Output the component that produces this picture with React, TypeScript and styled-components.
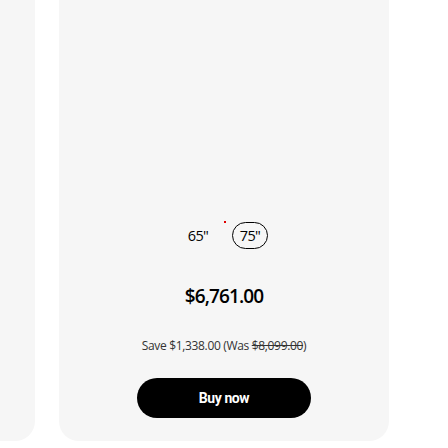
import React from "react";
import styled, { createGlobalStyle } from "styled-components";

const Global = createGlobalStyle`
  html, body { margin: 0; padding: 0; background: #ffffff; }
  body { width: 448px; height: 448px; overflow: hidden; font-family: "Open Sans", "Liberation Sans", sans-serif; }
`;

const Viewport = styled.div`
  width: 448px;
  height: 448px;
  overflow: hidden;
`;

const Track = styled.div`
  display: flex;
  gap: 24px;
  margin-top: -40px;
  margin-left: -295px;
`;

const Card = styled.div`
  flex: 0 0 330px;
  height: 481px;
  background: #f6f6f6;
  border-radius: 20px;
  box-sizing: border-box;
  display: flex;
  flex-direction: column;
  align-items: center;
  justify-content: flex-end;
  padding-bottom: 23px;
`;

const SizeRow = styled.div`
  position: relative;
  display: flex;
  align-items: center;
  gap: 16px;
`;

const SizeOption = styled.button<{ $active?: boolean }>`
  height: 27px;
  width: 36px;
  padding: 0;
  box-sizing: border-box;
  border: 1px solid ${(p) => (p.$active ? "#000" : "transparent")};
  border-radius: 14px;
  background: transparent;
  font-family: "Open Sans", sans-serif;
  font-size: 14.5px;
  color: #000;
  letter-spacing: -0.6px;
  cursor: pointer;
`;

const Dot = styled.span`
  position: absolute;
  left: 44px;
  top: -1px;
  width: 2px;
  height: 2px;
  background: #e00000;
`;

const Price = styled.div`
  margin-top: 35px;
  font-family: "Open Sans", sans-serif;
  font-weight: 600;
  font-size: 19px;
  letter-spacing: -0.9px;
  color: #000;
  line-height: 24px;
`;

const Save = styled.div`
  margin-top: 30px;
  font-family: "Open Sans", sans-serif;
  font-size: 12px;
  letter-spacing: -0.33px;
  color: #333;
  line-height: 16px;
`;

const Was = styled.span`
  text-decoration: line-through;
`;

const BuyButton = styled.button`
  margin-top: 24px;
  width: 174px;
  height: 40px;
  border: none;
  border-radius: 20px;
  background: #000;
  color: #fff;
  font-family: "Roboto", sans-serif;
  font-weight: 700;
  font-size: 14px;
  letter-spacing: -0.4px;
  cursor: pointer;
`;

export default function App() {
  return (
    <Viewport>
      <Global />
      <Track>
        <Card />
        <Card>
          <SizeRow>
            <SizeOption>65"</SizeOption>
            <Dot />
            <SizeOption $active>75"</SizeOption>
          </SizeRow>
          <Price>$6,761.00</Price>
          <Save>
            Save $1,338.00 (Was <Was>$8,099.00</Was>)
          </Save>
          <BuyButton>Buy now</BuyButton>
        </Card>
      </Track>
    </Viewport>
  );
}
